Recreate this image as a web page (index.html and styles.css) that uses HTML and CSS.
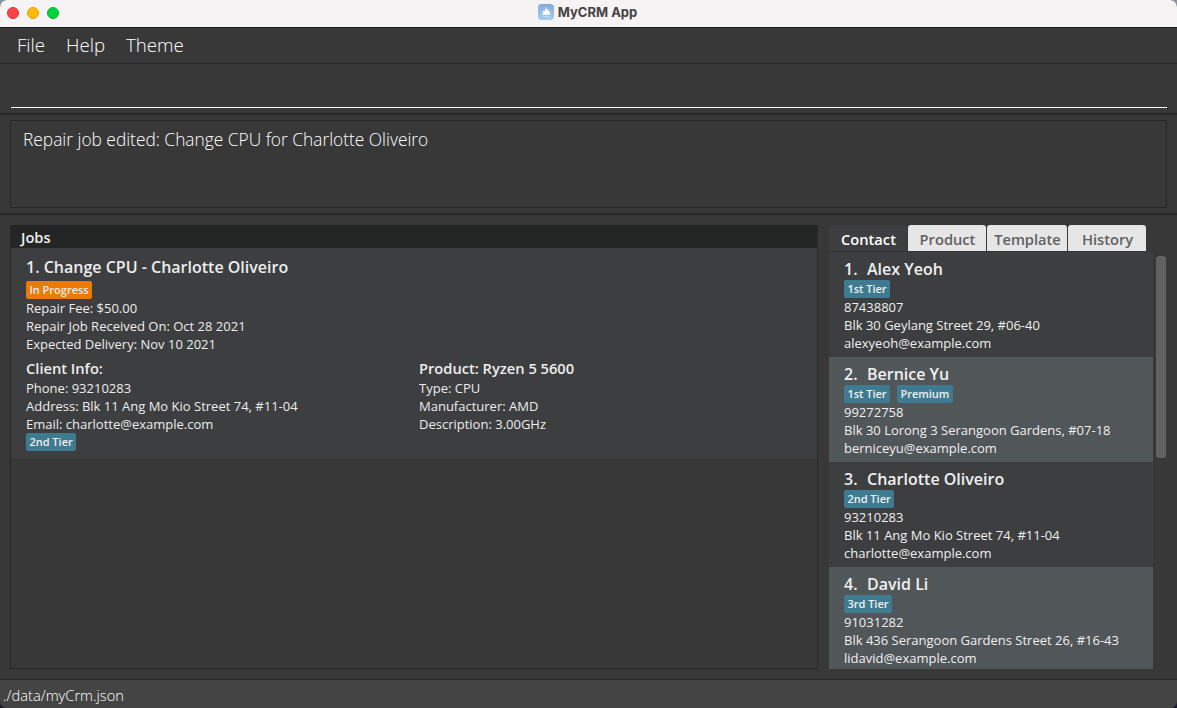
FILE: index.html
```html
<!DOCTYPE html>
<html lang="en">
<head>
<meta charset="utf-8">
<title>MyCRM App</title>
<link rel="stylesheet" href="styles.css">
</head>
<body>
<div class="window">
  <header class="titlebar">
    <div class="lights"><span class="light close"></span><span class="light minimise"></span><span class="light expand"></span></div>
    <div class="app-title">
      <svg class="app-icon" viewBox="0 0 16 16" width="16" height="16"><defs><linearGradient id="sky" x1="0" y1="0" x2="0" y2="1"><stop offset="0" stop-color="#84abd8"/><stop offset="1" stop-color="#a5cef2"/></linearGradient></defs><rect width="16" height="16" rx="3.6" fill="url(#sky)"/><path d="M3.8 10.7 5.2 8.6 4.9 6.2 6.6 7.6 8 3 9 6.6 10.4 4.6 10.4 7.8 12 7.2 11.7 10.7Z" fill="#fff"/><path d="M5 12.5H11" stroke="#cbe2f7" stroke-width=".8"/></svg>
      <span>MyCRM App</span>
    </div>
  </header>
  <nav class="menu"><span class="menu-file">File</span><span class="menu-help">Help</span><span class="menu-theme">Theme</span></nav>
  <div class="command"><div class="command-line"></div></div>
  <div class="result"><div class="result-box"><span class="result-text">Repair job edited: Change CPU for Charlotte Oliveiro</span></div></div>
  <main class="main">
    <section class="jobs">
      <h2 class="jobs-head"><span>Jobs</span></h2>
      <article class="job">
        <h3 class="name"><span class="job-name">1. Change CPU - Charlotte Oliveiro</span></h3>
        <div class="tags"><span class="tag progress">In Progress</span></div>
        <p>Repair Fee: $50.00</p>
        <p>Repair Job Received On: Oct 28 2021</p>
        <p>Expected Delivery: Nov 10 2021</p>
        <div class="details">
          <div>
            <h4>Client Info:</h4>
            <p>Phone: 93210283</p>
            <p>Address: Blk 11 Ang Mo Kio Street 74, #11-04</p>
            <p>Email: charlotte@example.com</p>
            <div class="tags"><span class="tag">2nd Tier</span></div>
          </div>
          <div>
            <h4>Product: Ryzen 5 5600</h4>
            <p>Type: CPU</p>
            <p>Manufacturer: AMD</p>
            <p>Description: 3.00GHz</p>
          </div>
        </div>
      </article>
    </section>
    <section class="side">
      <div class="tabs"><span class="tab active">Contact</span><span class="tab">Product</span><span class="tab template">Template</span><span class="tab">History</span></div>
      <div class="side-body">
        <div class="contacts">
          <article class="contact">
            <h3 class="name"><span class="num">1.</span>Alex Yeoh</h3>
            <div class="tags"><span class="tag">1st Tier</span></div>
            <p>87438807</p><p>Blk 30 Geylang Street 29, #06-40</p><p>alexyeoh@example.com</p>
          </article>
          <article class="contact">
            <h3 class="name"><span class="num">2.</span>Bernice Yu</h3>
            <div class="tags"><span class="tag">1st Tier</span><span class="tag">Premium</span></div>
            <p>99272758</p><p>Blk 30 Lorong 3 Serangoon Gardens, #07-18</p><p>berniceyu@example.com</p>
          </article>
          <article class="contact">
            <h3 class="name"><span class="num">3.</span>Charlotte Oliveiro</h3>
            <div class="tags"><span class="tag">2nd Tier</span></div>
            <p>93210283</p><p>Blk 11 Ang Mo Kio Street 74, #11-04</p><p>charlotte@example.com</p>
          </article>
          <article class="contact">
            <h3 class="name"><span class="num">4.</span>David Li</h3>
            <div class="tags"><span class="tag">3rd Tier</span></div>
            <p>91031282</p><p>Blk 436 Serangoon Gardens Street 26, #16-43</p><p>lidavid@example.com</p>
          </article>
        </div>
        <div class="scrollbar"></div>
      </div>
    </section>
  </main>
  <footer class="status"><span>./data/myCrm.json</span></footer>
</div>
</body>
</html>
```
FILE: styles.css
```css
* { box-sizing: border-box; }
html { background: #1b1c28; }
body { margin: 0; background: linear-gradient(#8d929e 0 50%, #1b1c28 50%) no-repeat; font-family: "Open Sans", "Noto Sans", sans-serif; overflow: hidden; }
h2, h3, h4, p { margin: 0; font-weight: 400; white-space: nowrap; }

.window { width: 1177px; height: 708px; display: flex; flex-direction: column; background: #383838; border-radius: 7px; overflow: hidden; }

.titlebar { flex: none; height: 28px; background: #f5f3f4; border-bottom: 1px solid #1c1c1c; display: grid; grid-template-columns: 1fr auto 1fr; align-items: center; padding: 0 2px 2px 0; }
.lights { display: flex; gap: 8px; padding: 1px 0 0 7px; }
.light { width: 12px; height: 12px; border-radius: 50%; }
.close { background: #ff4245; border: 1px solid #df2f35; }
.minimise { background: #ffb90a; border: 1px solid #e0a005; }
.expand { background: #00d43c; border: 1px solid #00b82f; }
.app-title { display: flex; align-items: center; gap: 4px; margin-top: -1px; font: 700 13px/16px Inter, sans-serif; color: #444243; }
.app-icon { display: block; }

.menu { flex: none; height: 36px; border-bottom: 1px solid #282828; display: flex; gap: 21px; padding: 0 17px; font-size: 18.67px; font-weight: 300; line-height: 33px; color: #fff; }
.command { flex: none; height: 51px; padding: 43px 10px 0 11px; border-bottom: 2px solid #2a2a2a; }
.command-line { height: 1px; background: #fff; }
.result { flex: none; height: 100px; padding: 5px 10px; border-bottom: 2px solid #2a2a2a; }
.result-box { height: 88px; border: 1px solid #282828; padding: 6px 12px; font-size: 17.33px; font-weight: 300; line-height: 24px; color: #fff; }

.main { flex: 1; display: flex; gap: 11px; padding: 10px 11px 10px 10px; min-height: 0; }
.jobs { width: 808px; flex: none; border: 1px solid #282828; }
.jobs-head { height: 23px; margin-top: -1px; background: #242625; color: #eee; padding-left: 10px; font-size: 14.67px; font-weight: 600; line-height: 25px; }
.job { height: 211px; background: #3c3e3f; padding: 8px 15px; color: #ededed; }
.name { height: 23px; font-size: 16px; font-weight: 600; line-height: 22px; }
p { height: 18px; font-size: 13px; line-height: 18px; }
h4 { height: 21px; font-size: 14.67px; font-weight: 600; line-height: 20px; }
.tags { height: 18px; display: flex; gap: 7px; align-items: flex-start; }
.tag { height: 18px; padding: 0 3.4px; border-radius: 2px; background: #3e7b91; font-size: 11px; font-weight: 600; line-height: 18px; white-space: nowrap; }
.job > .name { height: 25px; }
.progress { background: #eb7a09; }
.details { display: grid; grid-template-columns: 393px 1fr; padding-top: 5px; }

.side { width: 337px; display: flex; flex-direction: column; }
.tabs { flex: none; height: 26px; display: flex; gap: 1px; }
.tab { width: 78px; height: 26px; padding-left: 1px; border-radius: 3px 3px 0 0; background: #e6e6e6; color: #616161; font-size: 14.67px; font-weight: 600; line-height: 29px; text-align: center; white-space: nowrap; }
.template { width: 80px; }
.active { background: #3c3e3f; color: #fff; }
.side-body { flex: 1; min-height: 0; display: flex; gap: 3px; }
.contacts { width: 324px; overflow: hidden; padding-top: 1px; background: #333536; }
.contact { height: 105px; padding: 6px 15px 0; background: #3c3e3f; color: #f0f0f0; }
.contact:nth-child(even) { background: #515658; }
.contact .name { height: 22px; }
.num { display: inline-block; width: 23px; }
.scrollbar { width: 10px; height: 202px; margin-top: 5px; border-radius: 3px; background: #616161; }

.status { flex: none; height: 29px; border-top: 1px solid #282828; background: #444; padding: 1px 3px 0; font-size: 14.67px; line-height: 28px; color: #fff; font-weight: 300; }
```
